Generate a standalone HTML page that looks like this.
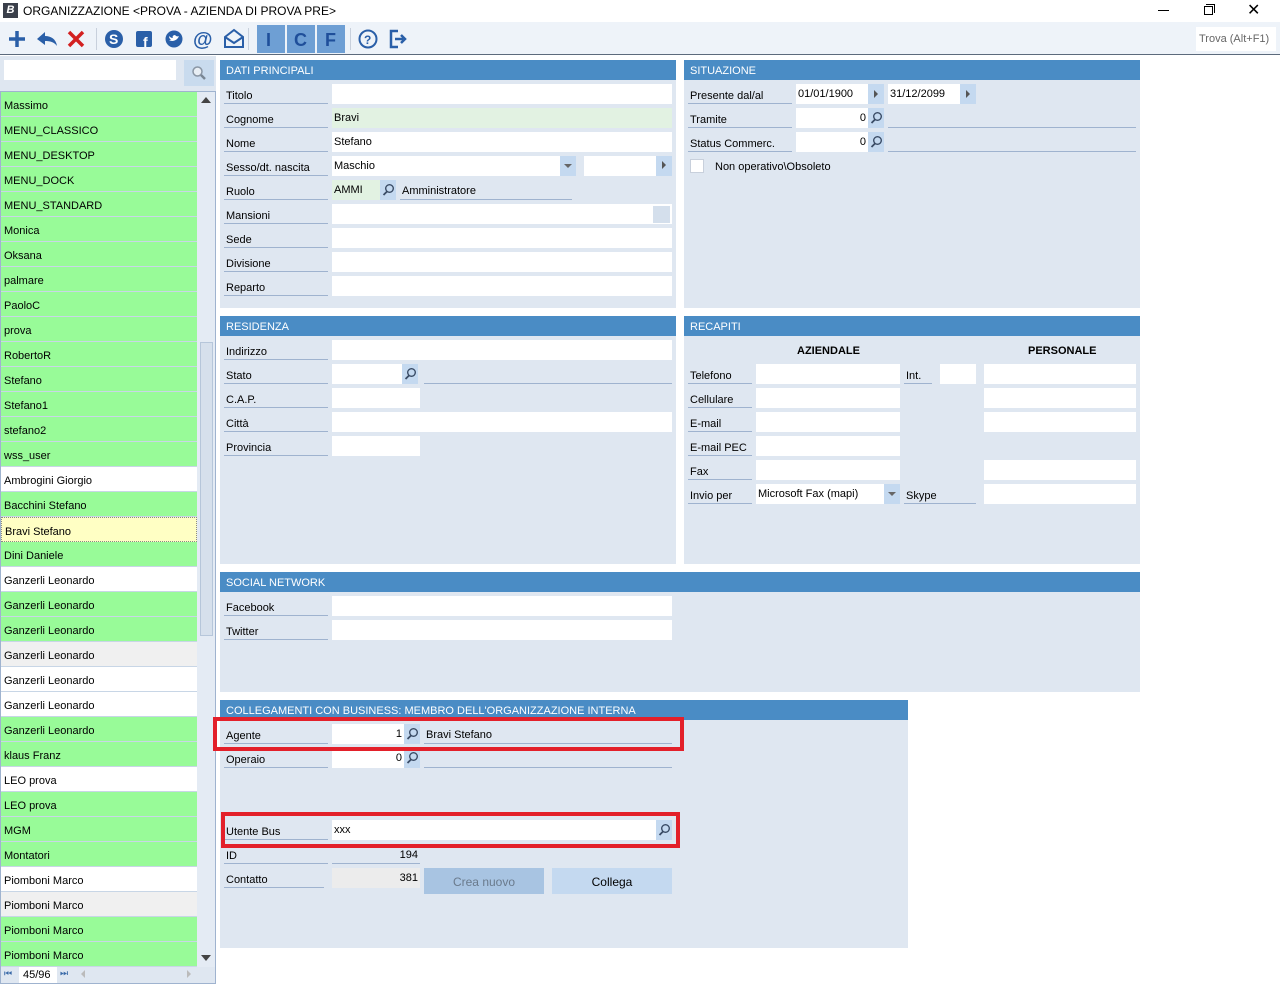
<!DOCTYPE html>
<html><head><meta charset="utf-8"><style>
*{margin:0;padding:0;box-sizing:border-box}
body{width:1280px;height:984px;position:relative;background:#fff;font-family:"Liberation Sans",sans-serif;font-size:11px;color:#000;overflow:hidden}
div{position:absolute}
.p{background:#dfe7f1}
.h{background:#4a8cc5;color:#fff;font-size:11px;padding:5px 0 0 6px;height:20px}
.l{height:20px;border-bottom:1px solid #9fb3cf;padding:6px 0 0 2px;white-space:nowrap}
.i{background:#fff;height:20px;padding:4px 2px;white-space:nowrap}
.g{background:#e2f2e2}
.btn{background:#c4d9f0;height:20px;width:16px}
.btn svg{position:absolute;left:2px;top:3px}
.u{height:20px;border-bottom:1px solid #9fb3cf;padding:5px 2px}
.r{text-align:right}
.row{left:0;width:196px;height:25px;border-bottom:1px solid #c8d6e6;padding:8px 0 0 3px}
.gr{background:#98fb98}
</style></head><body>
<div style="left:0;top:0;width:1280px;height:22px;background:#fff"></div>
<div style="left:3px;top:3px;width:15px;height:15px;background:#3a3f4a;color:#fff;font-size:11px;font-style:italic;font-weight:bold;text-align:center;line-height:15px">B</div>
<div style="left:23px;top:4px;font-size:12px">ORGANIZZAZIONE &lt;PROVA - AZIENDA DI PROVA PRE&gt;</div>
<div style="left:1158px;top:10px;width:11px;height:1px;background:#000"></div>
<div style="left:1204px;top:6px;width:9px;height:9px;border:1px solid #000"></div>
<div style="left:1206px;top:4px;width:9px;height:9px;border-top:1px solid #000;border-right:1px solid #000"></div>
<div style="left:1247px;top:0px;font-size:16px">✕</div>
<div style="left:0;top:22px;width:1280px;height:33px;background:#eef3f9;border-bottom:1px solid #5c6a7c"></div>
<svg style="position:absolute;left:0;top:22px" width="420" height="33">
<g stroke="#2a5fa8" stroke-width="3.5" fill="none"><path d="M17 9v16M9 17h16"/></g>
<path d="M37 17l8-7v4c6 0 11 3 12 10c-3-4-7-5-12-5v4z" fill="#2a5fa8"/>
<g stroke="#d32020" stroke-width="3.5"><path d="M69 10l14 14M83 10l-14 14"/></g>
<rect x="96" y="6" width="1" height="22" fill="#c8d0dc"/>
<circle cx="114" cy="17" r="9" fill="#2a5fa8"/><text x="109" y="22" fill="#fff" font-size="14" font-weight="bold" font-family="Liberation Sans">S</text>
<rect x="136" y="9" width="16" height="16" rx="2" fill="#2a5fa8"/><text x="143" y="25" fill="#fff" font-size="14" font-weight="bold" font-family="Liberation Sans">f</text>
<circle cx="174" cy="17" r="8.5" fill="#2a5fa8"/><path d="M169 18c3 2 8 1 10-4c-2 1-3 0-4-1c-2 0-3 2-2 3c-2 0-3-1-4-2c0 2 1 3 2 4z" fill="#fff"/>
<text x="193" y="24" fill="#2a5fa8" font-size="20" font-weight="bold" font-family="Liberation Sans">@</text>
<path d="M225 15l9-7 9 7v10h-18z M225 15l9 6 9-6" stroke="#2a5fa8" stroke-width="2" fill="none"/>
<rect x="248" y="6" width="1" height="22" fill="#c8d0dc"/>
<rect x="257" y="3" width="28" height="28" fill="#6e9fd4"/><rect x="287" y="3" width="28" height="28" fill="#6e9fd4"/><rect x="317" y="3" width="28" height="28" fill="#6e9fd4"/>
<text x="266" y="24" fill="#1f4f9a" font-size="18" font-weight="bold" font-family="Liberation Sans">I</text>
<text x="294" y="24" fill="#1f4f9a" font-size="18" font-weight="bold" font-family="Liberation Sans">C</text>
<text x="325" y="24" fill="#1f4f9a" font-size="18" font-weight="bold" font-family="Liberation Sans">F</text>
<rect x="350" y="6" width="1" height="22" fill="#c8d0dc"/>
<circle cx="368" cy="17" r="8.5" stroke="#2a5fa8" stroke-width="2" fill="none"/><text x="364" y="22" fill="#2a5fa8" font-size="12" font-weight="bold" font-family="Liberation Sans">?</text>
<path d="M398 9h-7v16h7" stroke="#2a5fa8" stroke-width="2.5" fill="none"/><path d="M395 17h8M401 13l4 4-4 4" stroke="#2a5fa8" stroke-width="2.5" fill="none"/>
</svg>
<div style="left:1196px;top:27px;width:80px;height:24px;background:#fff;color:#666;font-size:11px;padding:6px 3px">Trova (Alt+F1)</div>

<div style="left:0;top:56px;width:216px;height:928px;background:#dfe7f1"></div>
<div style="left:4px;top:60px;width:172px;height:20px;background:#fff"></div>
<div style="left:184px;top:60px;width:30px;height:26px;background:#c9dbee"><svg style="position:absolute;left:7px;top:5px" width="16" height="16"><circle cx="6.5" cy="6.5" r="4.5" fill="#e8eef4" stroke="#8a96a4" stroke-width="1.5"/><path d="M10 10l4 4" stroke="#7a8694" stroke-width="2.5"/></svg></div>
<div style="left:0;top:91px;width:216px;height:893px;border:1px solid #9fb3cf;background:#fff"></div>
<div style="left:1px;top:92px;width:196px;height:875px;overflow:hidden">
<div class="row gr" style="top:0">Massimo</div>
<div class="row gr" style="top:25px">MENU_CLASSICO</div>
<div class="row gr" style="top:50px">MENU_DESKTOP</div>
<div class="row gr" style="top:75px">MENU_DOCK</div>
<div class="row gr" style="top:100px">MENU_STANDARD</div>
<div class="row gr" style="top:125px">Monica</div>
<div class="row gr" style="top:150px">Oksana</div>
<div class="row gr" style="top:175px">palmare</div>
<div class="row gr" style="top:200px">PaoloC</div>
<div class="row gr" style="top:225px">prova</div>
<div class="row gr" style="top:250px">RobertoR</div>
<div class="row gr" style="top:275px">Stefano</div>
<div class="row gr" style="top:300px">Stefano1</div>
<div class="row gr" style="top:325px">stefano2</div>
<div class="row gr" style="top:350px">wss_user</div>
<div class="row" style="top:375px">Ambrogini Giorgio</div>
<div class="row gr" style="top:400px">Bacchini Stefano</div>
<div class="row" style="top:425px;background:#ffffc4;border:1px dotted #888">Bravi Stefano</div>
<div class="row gr" style="top:450px">Dini Daniele</div>
<div class="row" style="top:475px">Ganzerli Leonardo</div>
<div class="row gr" style="top:500px">Ganzerli Leonardo</div>
<div class="row gr" style="top:525px">Ganzerli Leonardo</div>
<div class="row" style="top:550px;background:#f0f0f0">Ganzerli Leonardo</div>
<div class="row" style="top:575px">Ganzerli Leonardo</div>
<div class="row" style="top:600px">Ganzerli Leonardo</div>
<div class="row gr" style="top:625px">Ganzerli Leonardo</div>
<div class="row gr" style="top:650px">klaus Franz</div>
<div class="row" style="top:675px">LEO prova</div>
<div class="row gr" style="top:700px">LEO prova</div>
<div class="row gr" style="top:725px">MGM</div>
<div class="row gr" style="top:750px">Montatori</div>
<div class="row" style="top:775px">Piomboni Marco</div>
<div class="row" style="top:800px;background:#f0f0f0">Piomboni Marco</div>
<div class="row gr" style="top:825px">Piomboni Marco</div>
<div class="row gr" style="top:850px">Piomboni Marco</div>
</div>
<div style="left:197px;top:92px;width:18px;height:875px;background:#e4ebf4"></div>
<div style="left:201px;top:97px;width:0;height:0;border:5px solid transparent;border-bottom:6px solid #444;border-top:0"></div>
<div style="left:201px;top:955px;width:0;height:0;border:5px solid transparent;border-top:6px solid #444;border-bottom:0"></div>
<div style="left:200px;top:342px;width:13px;height:294px;background:#d6e0ec;border:1px solid #b6c6da"></div>
<div style="left:1px;top:967px;width:214px;height:16px;background:#dfe7f1"></div>
<div style="left:4px;top:968px;font-size:9px;color:#3a6aa8">⏮</div>
<div style="left:19px;top:967px;width:38px;height:16px;background:#fff;padding:2px 4px">45/96</div>
<div style="left:60px;top:968px;font-size:9px;color:#3a6aa8">⏭</div>
<div style="left:81px;top:970px;border:4px solid transparent;border-right:4px solid #bbb;border-left:0"></div>
<div style="left:187px;top:970px;border:4px solid transparent;border-left:4px solid #bbb;border-right:0"></div>

<svg width="0" height="0" style="position:absolute"><defs><g id="m"><circle cx="7.5" cy="5.5" r="3.8" fill="none" stroke="#3a4c66" stroke-width="1.4"/><path d="M5 8.5L1.5 12" stroke="#3a4c66" stroke-width="1.8"/></g></defs></svg>

<div class="p" style="left:220px;top:60px;width:456px;height:248px"></div>
<div class="h" style="left:220px;top:60px;width:456px">DATI PRINCIPALI</div>
<div class="l" style="left:224px;top:84px;width:104px">Titolo</div><div class="i" style="left:332px;top:84px;width:340px"></div>
<div class="l" style="left:224px;top:108px;width:104px">Cognome</div><div class="i g" style="left:332px;top:108px;width:340px">Bravi</div>
<div class="l" style="left:224px;top:132px;width:104px">Nome</div><div class="i" style="left:332px;top:132px;width:340px">Stefano</div>
<div class="l" style="left:224px;top:156px;width:104px">Sesso/dt. nascita</div><div class="i" style="left:332px;top:156px;width:244px">Maschio</div><div class="btn" style="left:560px;top:156px"></div><div style="left:564px;top:164px;border:4px solid transparent;border-top:4px solid #666;border-bottom:0"></div>
<div class="i" style="left:584px;top:156px;width:88px"></div><div class="btn" style="left:656px;top:156px"></div><div style="left:662px;top:161px;border:4px solid transparent;border-left:4px solid #555;border-right:0"></div>
<div class="l" style="left:224px;top:180px;width:104px">Ruolo</div><div class="i g" style="left:332px;top:180px;width:48px">AMMI</div><div class="btn" style="left:380px;top:180px"><svg width="14" height="14"><use href="#m"/></svg></div><div class="u" style="left:400px;top:180px;width:172px">Amministratore</div>
<div class="l" style="left:224px;top:204px;width:104px">Mansioni</div><div class="i" style="left:332px;top:204px;width:340px"></div><div style="left:653px;top:206px;width:17px;height:17px;background:#d4dfec"></div>
<div class="l" style="left:224px;top:228px;width:104px">Sede</div><div class="i" style="left:332px;top:228px;width:340px"></div>
<div class="l" style="left:224px;top:252px;width:104px">Divisione</div><div class="i" style="left:332px;top:252px;width:340px"></div>
<div class="l" style="left:224px;top:276px;width:104px">Reparto</div><div class="i" style="left:332px;top:276px;width:340px"></div>

<div class="p" style="left:684px;top:60px;width:456px;height:248px"></div>
<div class="h" style="left:684px;top:60px;width:456px">SITUAZIONE</div>
<div class="l" style="left:688px;top:84px;width:104px">Presente dal/al</div>
<div class="i" style="left:796px;top:84px;width:72px">01/01/1900</div><div class="btn" style="left:868px;top:84px"></div><div style="left:874px;top:90px;border:4px solid transparent;border-left:4px solid #555;border-right:0"></div>
<div class="i" style="left:888px;top:84px;width:72px">31/12/2099</div><div class="btn" style="left:960px;top:84px"></div><div style="left:966px;top:90px;border:4px solid transparent;border-left:4px solid #555;border-right:0"></div>
<div class="l" style="left:688px;top:108px;width:104px">Tramite</div><div class="i r" style="left:796px;top:108px;width:72px">0</div><div class="btn" style="left:868px;top:108px"><svg width="14" height="14"><use href="#m"/></svg></div><div class="u" style="left:888px;top:108px;width:248px"></div>
<div class="l" style="left:688px;top:132px;width:104px">Status Commerc.</div><div class="i r" style="left:796px;top:132px;width:72px">0</div><div class="btn" style="left:868px;top:132px"><svg width="14" height="14"><use href="#m"/></svg></div><div class="u" style="left:888px;top:132px;width:248px"></div>
<div style="left:690px;top:159px;width:14px;height:14px;background:#fff;border:1px solid #c8d0dc"></div>
<div style="left:715px;top:161px">Non operativo\Obsoleto</div>

<div class="p" style="left:220px;top:316px;width:456px;height:248px"></div>
<div class="h" style="left:220px;top:316px;width:456px">RESIDENZA</div>
<div class="l" style="left:224px;top:340px;width:104px">Indirizzo</div><div class="i" style="left:332px;top:340px;width:340px"></div>
<div class="l" style="left:224px;top:364px;width:104px">Stato</div><div class="i" style="left:332px;top:364px;width:70px"></div><div class="btn" style="left:402px;top:364px"><svg width="14" height="14"><use href="#m"/></svg></div><div class="u" style="left:424px;top:364px;width:248px"></div>
<div class="l" style="left:224px;top:388px;width:104px">C.A.P.</div><div class="i" style="left:332px;top:388px;width:88px"></div>
<div class="l" style="left:224px;top:412px;width:104px">Città</div><div class="i" style="left:332px;top:412px;width:340px"></div>
<div class="l" style="left:224px;top:436px;width:104px">Provincia</div><div class="i" style="left:332px;top:436px;width:88px"></div>

<div class="p" style="left:684px;top:316px;width:456px;height:248px"></div>
<div class="h" style="left:684px;top:316px;width:456px">RECAPITI</div>
<div style="left:797px;top:345px;font-weight:bold">AZIENDALE</div>
<div style="left:1028px;top:345px;font-weight:bold">PERSONALE</div>
<div class="l" style="left:688px;top:364px;width:64px">Telefono</div><div class="i" style="left:756px;top:364px;width:144px"></div><div class="l" style="left:904px;top:364px;width:28px">Int.</div><div class="i" style="left:940px;top:364px;width:36px"></div><div class="i" style="left:984px;top:364px;width:152px"></div>
<div class="l" style="left:688px;top:388px;width:64px">Cellulare</div><div class="i" style="left:756px;top:388px;width:144px"></div><div class="i" style="left:984px;top:388px;width:152px"></div>
<div class="l" style="left:688px;top:412px;width:64px">E-mail</div><div class="i" style="left:756px;top:412px;width:144px"></div><div class="i" style="left:984px;top:412px;width:152px"></div>
<div class="l" style="left:688px;top:436px;width:64px">E-mail PEC</div><div class="i" style="left:756px;top:436px;width:144px"></div>
<div class="l" style="left:688px;top:460px;width:64px">Fax</div><div class="i" style="left:756px;top:460px;width:144px"></div><div class="i" style="left:984px;top:460px;width:152px"></div>
<div class="l" style="left:688px;top:484px;width:64px">Invio per</div><div class="i" style="left:756px;top:484px;width:144px">Microsoft Fax (mapi)</div><div class="btn" style="left:884px;top:484px"></div><div style="left:888px;top:492px;border:4px solid transparent;border-top:4px solid #666;border-bottom:0"></div>
<div class="l" style="left:904px;top:484px;width:72px">Skype</div><div class="i" style="left:984px;top:484px;width:152px"></div>

<div class="p" style="left:220px;top:572px;width:920px;height:120px"></div>
<div class="h" style="left:220px;top:572px;width:920px">SOCIAL NETWORK</div>
<div class="l" style="left:224px;top:596px;width:104px">Facebook</div><div class="i" style="left:332px;top:596px;width:340px"></div>
<div class="l" style="left:224px;top:620px;width:104px">Twitter</div><div class="i" style="left:332px;top:620px;width:340px"></div>

<div class="p" style="left:220px;top:700px;width:688px;height:248px"></div>
<div class="h" style="left:220px;top:700px;width:688px">COLLEGAMENTI CON BUSINESS: MEMBRO DELL'ORGANIZZAZIONE INTERNA</div>
<div class="l" style="left:224px;top:724px;width:104px">Agente</div><div class="i r" style="left:332px;top:724px;width:72px">1</div><div class="btn" style="left:404px;top:724px"><svg width="14" height="14"><use href="#m"/></svg></div><div class="u" style="left:424px;top:724px;width:248px">Bravi Stefano</div>
<div class="l" style="left:224px;top:748px;width:104px">Operaio</div><div class="i r" style="left:332px;top:748px;width:72px">0</div><div class="btn" style="left:404px;top:748px"><svg width="14" height="14"><use href="#m"/></svg></div><div class="u" style="left:424px;top:748px;width:248px"></div>
<div class="l" style="left:224px;top:820px;width:104px">Utente Bus</div><div class="i" style="left:332px;top:820px;width:324px">xxx</div><div class="btn" style="left:656px;top:820px"><svg width="14" height="14"><use href="#m"/></svg></div>
<div class="l" style="left:224px;top:844px;width:104px">ID</div><div class="u r" style="left:332px;top:844px;width:88px">194</div>
<div class="l" style="left:224px;top:868px;width:100px">Contatto</div><div class="i r" style="left:332px;top:868px;width:88px;background:#ececec">381</div>
<div style="left:424px;top:868px;width:120px;height:26px;background:#a8c4e2;color:#6a7a8c;font-size:12px;text-align:center;padding-top:7px">Crea nuovo</div>
<div style="left:552px;top:868px;width:120px;height:26px;background:#c4d9f0;font-size:12px;text-align:center;padding-top:7px">Collega</div>
<div style="left:213px;top:717px;width:471px;height:34px;border:4px solid #e3202a"></div>
<div style="left:221px;top:812px;width:459px;height:36px;border:4px solid #e3202a"></div>
</body></html>
